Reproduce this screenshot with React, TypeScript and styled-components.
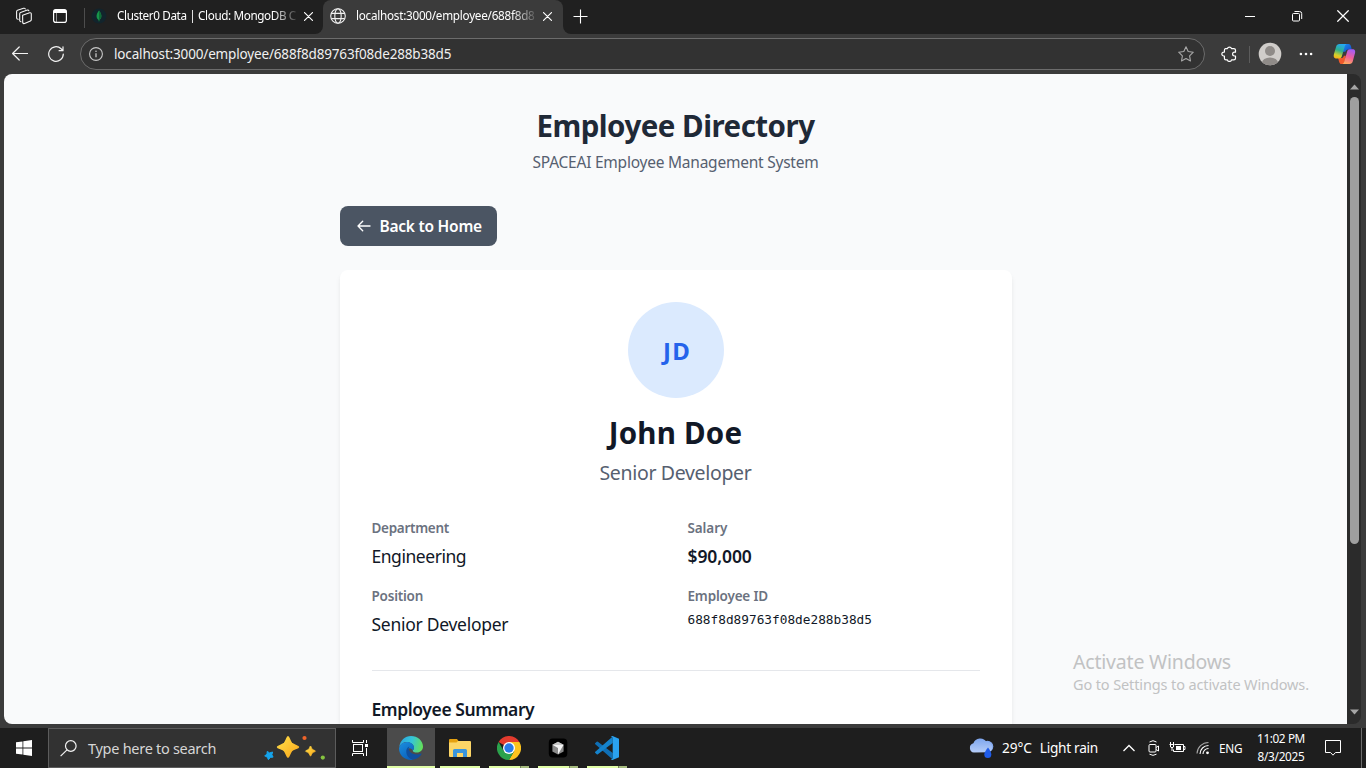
import React from "react";
import styled, { createGlobalStyle } from "styled-components";

const SANS = `"Segoe UI", "Noto Sans", "Open Sans", sans-serif`;

const GlobalStyle = createGlobalStyle`
  * { box-sizing: border-box; }
  body { margin: 0; background: #3b3b3b; font-family: ${SANS}; overflow: hidden; }
  h1, h2, h3, p { margin: 0; }
  button { font: inherit; border: 0; background: none; padding: 0; color: inherit; }
  svg { display: block; flex: none; }
`;

const Desktop = styled.div`
  display: flex;
  flex-direction: column;
  width: 1366px;
  height: 768px;
  background: #3b3b3b;
  overflow: hidden;
`;

/* Text run with explicit size and tracking */
const Label = styled.span<{ $size: number; $track?: number; $color?: string; $weight?: number }>`
  display: block;
  font-size: ${(p) => p.$size}px;
  letter-spacing: ${(p) => p.$track ?? 0}px;
  color: ${(p) => p.$color ?? "#fff"};
  font-weight: ${(p) => p.$weight ?? 400};
  white-space: nowrap;
`;

const Gap = styled.i<{ $w: number }>`
  flex: none;
  width: ${(p) => p.$w}px;
`;

/* ---------- Browser tab strip ---------- */
const TabStrip = styled.header`
  display: flex;
  height: 34px;
  background: #3b3b3b;
  color: #fff;
`;
const StripStart = styled.div`
  display: flex;
  align-items: center;
  width: 323px;
  padding: 0 10px 2px 15px;
  background: #202020;
  border-bottom-right-radius: 8px;
`;
const StripDivider = styled.i`
  width: 1px;
  height: 20px;
  margin: 3px 6px 0 17px;
  background: #4d4d4d;
`;
const TabTitle = styled.div<{ $gap: number }>`
  width: 180px;
  margin: -2px 0 0 ${(p) => p.$gap}px;
  line-height: 18px;
  mask-image: linear-gradient(90deg, #000 156px, rgba(0, 0, 0, 0.12) 180px);
`;
const ActiveTabWell = styled.div`
  width: 240px;
  background: #202020;
`;
const ActiveTab = styled.div`
  display: flex;
  align-items: center;
  height: 34px;
  padding: 0 11px 2px 7px;
  background: #3b3b3b;
  border-radius: 8px 8px 0 0;
`;
const StripRest = styled.div`
  display: flex;
  flex: 1;
  align-items: center;
  justify-content: space-between;
  padding: 0 17px 2px 10px;
  background: #202020;
  border-bottom-left-radius: 8px;
`;
const WindowButtons = styled.div`
  display: flex;
  align-items: center;
`;
const TabClose = styled.div`
  margin-left: auto;
`;

/* ---------- Browser toolbar ---------- */
const Toolbar = styled.nav`
  display: flex;
  align-items: center;
  height: 40px;
  padding-left: 12px;
  color: #f2f2f2;
`;
const AddressBar = styled.div`
  display: flex;
  flex: none;
  align-items: center;
  width: 1125px;
  height: 32px;
  margin: 0 16px;
  padding: 0 10px 0 8px;
  gap: 11px;
  background: #323232;
  border: 1px solid #6c6c6c;
  border-radius: 16px;
`;
const Url = styled.div`
  flex: 1;
  margin-top: -1px;
  line-height: 20px;
`;
const ToolDivider = styled.i`
  flex: none;
  width: 1px;
  height: 17px;
  margin: 0 8px 0 12px;
  background: #5c5c5c;
`;

/* ---------- Viewport ---------- */
const Viewport = styled.div`
  display: flex;
  height: 650px;
  margin: 0 5px 4px 4px;
  position: relative;
`;
const Page = styled.main`
  flex: 1;
  height: 650px;
  padding-top: 32px;
  overflow: hidden;
  background: #f9fafb;
  border-radius: 8px 0 0 8px;
`;
const ScrollBar = styled.div`
  display: flex;
  flex-direction: column;
  align-items: center;
  width: 14px;
  padding: 10px 0 9px;
  background: #2b2b2b;
  border-radius: 0 8px 8px 0;
`;
const ScrollThumb = styled.div`
  width: 9px;
  height: 447px;
  margin: 7px 0 auto;
  background: #9f9f9f;
  border-radius: 5px;
`;
const Container = styled.div`
  width: 672px;
  margin: 0 auto;
`;
const PageHeader = styled.div`
  margin-bottom: 32px;
  text-align: center;
`;
const Title = styled.h1`
  padding-top: 2px;
  margin-bottom: 6px;
  line-height: 36px;
`;
const Line = styled.p<{ $h: number }>`
  line-height: ${(p) => p.$h}px;
`;
const BackButton = styled.button`
  display: flex;
  align-items: center;
  gap: 8px;
  width: 157px;
  height: 40px;
  padding: 0 16px;
  margin-bottom: 24px;
  background: #4b5563;
  border-radius: 8px;
  line-height: 25px;
`;
const Card = styled.section`
  height: 520px;
  padding: 32px;
  background: #fff;
  border-radius: 8px;
  box-shadow: 0 4px 6px -1px rgba(0, 0, 0, 0.08), 0 2px 4px -1px rgba(0, 0, 0, 0.04);
`;
const Profile = styled.div`
  display: flex;
  flex-direction: column;
  align-items: center;
  margin-bottom: 31px;
`;
const Avatar = styled.div`
  display: flex;
  align-items: center;
  justify-content: center;
  width: 96px;
  height: 96px;
  padding: 2px 0 0 3px;
  margin-bottom: 16px;
  background: #dbeafe;
  border-radius: 50%;
  line-height: 32px;
`;
const Name = styled.h2`
  padding-top: 1px;
  margin-bottom: 8px;
  line-height: 36px;
`;
const Facts = styled.div`
  display: grid;
  grid-template-columns: 1fr 1fr;
  gap: 16px 24px;
  padding-bottom: 32px;
  border-bottom: 1px solid #e5e7eb;
`;
const Fact = styled.div`
  display: flex;
  flex-direction: column;
  gap: 4px;
`;
const ObjectId = styled.span`
  font-family: Consolas, "DejaVu Sans Mono", monospace;
  font-size: 12.77px;
  line-height: 19px;
  color: #111827;
`;
const Summary = styled.h3`
  margin-top: 24px;
  line-height: 28px;
`;
const Watermark = styled.aside`
  position: absolute;
  left: 1069px;
  top: 575px;
  display: flex;
  flex-direction: column;
`;

/* ---------- Taskbar ---------- */
const Taskbar = styled.footer`
  display: flex;
  height: 40px;
  background: #1e1e1e;
  color: #fff;
`;
const StartButton = styled.div`
  display: flex;
  align-items: center;
  justify-content: center;
  width: 48px;
`;
const SearchBox = styled.div`
  display: flex;
  align-items: center;
  justify-content: space-between;
  width: 288px;
  padding: 0 9px 0 11px;
  background: #323232;
  border: 1px solid #5c5c5c;
  line-height: 20px;
`;
const SearchPrompt = styled.div`
  display: flex;
  align-items: center;
  gap: 11px;
`;
const TaskView = styled.div`
  display: flex;
  align-items: center;
  width: 51px;
  padding-left: 16px;
`;
const AppButton = styled.div<{ $active?: boolean }>`
  display: flex;
  flex-direction: column;
  align-items: center;
  width: ${(p) => (p.$active ? 48 : 49)}px;
  padding-top: 8px;
  background: ${(p) => (p.$active ? "#4b4b4b" : "transparent")};
`;
const RunningBar = styled.i<{ $wide?: boolean; $stacked?: boolean }>`
  width: ${(p) => (p.$wide ? 48 : 40)}px;
  height: 2px;
  margin-top: 6px;
  background: ${(p) =>
    p.$stacked ? "linear-gradient(90deg, #e0fda6 31px, #73805a 31px 32px, #a6bc7f 32px)" : "#e0fda6"};
`;
const Tray = styled.div`
  display: flex;
  align-items: center;
  margin-left: auto;
  line-height: 18px;
`;
const Weather = styled.div`
  display: flex;
  align-items: center;
  width: 154px;
`;
const TrayIcons = styled.div`
  display: flex;
  align-items: center;
  width: 96px;
`;
const Language = styled.div`
  width: 32px;
`;
const Clock = styled.div`
  display: flex;
  flex-direction: column;
  align-items: center;
  width: 60px;
  margin-right: 14px;
  padding-bottom: 2px;
`;
const ShowDesktop = styled.i`
  width: 5px;
  height: 40px;
  margin-left: 20px;
  border-left: 1px solid #6b6b6b;
`;

/* ---------- Icons ---------- */
const WorkspacesIcon = () => (
  <svg width="18" height="18" viewBox="0 0 18 18" fill="none" stroke="#f5f5f5" strokeWidth="1.1" strokeLinejoin="round" strokeLinecap="round">
    <path d="M7.600 8.200 14.600 5.800q1.500-.3 1.700 1v5.700q0 1-.9 1.400l-5.800 2.600q-1.500.4-1.900-1z" />
    <path d="M4.700 13.500V6.800q0-1 .9-1.400L12.300 3.100q1.300-.3 1.600.7M4.700 13.500q.2 1.300 1.300 1.200" />
    <path d="M3.200 12.200Q1.700 12.300 1.600 11V4.600q0-1 .9-1.300L8.600 1.300q1.300-.3 1.700.6" />
  </svg>
);
const TabActionsIcon = () => (
  <svg width="14" height="14" viewBox="0 0 14 14">
    <rect x=".6" y=".6" width="12.8" height="12.8" rx="2.2" fill="none" stroke="#fff" strokeWidth="1.2" />
    <path d="M.6 4V2.600Q.8.8 2.600.6h8.800q1.800.2 2 2V4z" fill="#fff" />
    <path d="M3.500 4v9" stroke="#fff" opacity=".5" />
  </svg>
);
const MongoIcon = () => (
  <svg width="16" height="16" viewBox="0 0 16 16">
    <circle cx="8" cy="8" r="7.5" fill="#12242c" />
    <path d="M8 2.500c2.600 3 3.600 7 .4 9.500L8.200 13.500h-.4L7.600 12C4.400 9.500 5.400 5.500 8 2.500z" fill="#17954b" />
    <path d="M8 2.500c2.600 3 3.600 7 .4 9.500L8 13.500z" fill="#0f6b36" />
  </svg>
);
const CloseIcon = ({ size = 9, stroke = 1.3 }: { size?: number; stroke?: number }) => (
  <svg width={size} height={size} viewBox="0 0 10 10" stroke="#fff" strokeWidth={stroke} strokeLinecap="round">
    <path d="M.6.6l8.800 8.800M9.400.6L.6 9.400" />
  </svg>
);
const GlobeIcon = () => (
  <svg width="16" height="16" viewBox="0 0 16 16" fill="none" stroke="#f0f0f0" strokeWidth="1.1">
    <circle cx="8" cy="8" r="7.3" />
    <ellipse cx="8" cy="8" rx="3.2" ry="7.3" />
    <path d="M1.300 5.400h13.400M1.300 10.600h13.400" />
  </svg>
);
const PlusIcon = () => (
  <svg width="15" height="15" viewBox="0 0 15 15" stroke="#fff" strokeWidth="1.1">
    <path d="M7.500.5v14M.5 7.500h14" />
  </svg>
);
const MinimizeIcon = () => (
  <svg width="10" height="10" viewBox="0 0 10 10">
    <path d="M0 5.500h10" stroke="#fff" />
  </svg>
);
const RestoreIcon = () => (
  <svg width="12" height="12" viewBox="0 0 12 12" fill="none" stroke="#fff">
    <rect x="1.500" y="3.500" width="7" height="7.500" rx="1" />
    <path d="M3.500 1.500h5q2.200 0 2.200 2v5.500" />
  </svg>
);
const BackIcon = () => (
  <svg width="16" height="16" viewBox="0 0 16 16" fill="none" stroke="#f2f2f2" strokeWidth="1.2" strokeLinecap="round" strokeLinejoin="round">
    <path d="M15.500 7.500H.8M7.200 1L.6 7.500l6.600 6.500" />
  </svg>
);
const RefreshIcon = () => (
  <svg width="16" height="16" viewBox="0 0 16 16" fill="none" stroke="#f2f2f2" strokeWidth="1.2" strokeLinecap="round" strokeLinejoin="round">
    <path d="M15.300 8a7.300 7.300 0 1 1-2.200-5.200l1.700 1.700M15 .8v3.900h-3.900" />
  </svg>
);
const InfoIcon = () => (
  <svg width="14" height="14" viewBox="0 0 14 14" fill="none" stroke="#c8c8c8" strokeWidth="1.1">
    <circle cx="7" cy="7" r="6.4" />
    <path d="M7 6.300v3.900" strokeWidth="1.3" />
    <circle cx="7" cy="4.200" r=".8" fill="#c8c8c8" stroke="none" />
  </svg>
);
const StarIcon = () => (
  <svg width="16" height="16" viewBox="0 0 16 16" fill="none" stroke="#a8a8a8" strokeWidth="1.1" strokeLinejoin="round">
    <path d="M8 .8l2.200 4.700 5.100.7-3.700 3.600.9 5.200L8 12.500 3.500 15l.9-5.200L.7 6.200l5.100-.7z" />
  </svg>
);
const PuzzleIcon = () => (
  <svg width="16" height="16" viewBox="0 0 16 16" fill="none" stroke="#fff" strokeWidth="1.2" strokeLinejoin="round">
    <path d="M4.500 2.700h1.900a2.100 2.100 0 0 1 4.100 0h2.300q1.700 0 1.700 1.600v1.900h-1a1.900 1.900 0 0 0 0 3.800h1v2.200q0 1.600-1.700 1.600h-2.300a2.100 2.100 0 0 1-4.100 0H5q-1.600 0-1.600-1.600V10h-.6a1.950 1.950 0 0 1 0-3.900h.6V4.200q0-1.300 1.100-1.500z" />
  </svg>
);
const PersonIcon = () => (
  <svg width="24" height="24" viewBox="0 0 24 24">
    <clipPath id="person"><circle cx="12" cy="12" r="11.3" /></clipPath>
    <g clipPath="url(#person)">
      <rect width="24" height="24" fill="#d0cdca" />
      <circle cx="12" cy="9" r="5" fill="#8f8b88" />
      <ellipse cx="12" cy="21" rx="8" ry="5.5" fill="#8f8b88" />
    </g>
  </svg>
);
const DotsIcon = () => (
  <svg width="14" height="4" viewBox="0 0 14 4" fill="#fff">
    <circle cx="1.900" cy="2" r="1.3" /><circle cx="7" cy="2" r="1.3" /><circle cx="12.100" cy="2" r="1.3" />
  </svg>
);
const CopilotIcon = () => (
  <svg width="23" height="22" viewBox="0 0 23 22">
    <defs>
      <linearGradient id="cpA" x1=".6" y1="0" x2=".3" y2="1">
        <stop offset="0" stopColor="#25a9f5" /><stop offset=".45" stopColor="#2fb08a" /><stop offset=".8" stopColor="#d6d02a" /><stop offset="1" stopColor="#f8b419" />
      </linearGradient>
      <linearGradient id="cpB" x1=".6" y1="0" x2=".3" y2="1">
        <stop offset="0" stopColor="#a45cf5" /><stop offset=".5" stopColor="#ee5e9c" /><stop offset="1" stopColor="#ffab5a" />
      </linearGradient>
      <linearGradient id="cpC" x1="0" y1="0" x2="1" y2="1">
        <stop offset="0" stopColor="#1b8ff0" /><stop offset="1" stopColor="#1546c9" />
      </linearGradient>
    </defs>
    <path d="M12 1h3.500c1.600 0 2 1.200 2.500 2.600l.8 2.900h-3.500c-1.700 0-2.400.8-2.900 2.300H9.500z" fill="url(#cpC)" />
    <path d="M11 21H8.500c-1.600 0-2-1.200-2.500-2.600L5.200 15H8c1.700 0 2.400-.8 2.900-2.300h2z" fill="#f0592b" />
    <path d="M6.500 1h7.200c-1.200.4-1.600 1.400-2 2.700L9 12.800c-.5 1.700-1.200 2.700-3 2.700H3.500C.8 15.500.3 13.300 1 11L3.100 3.800C3.600 2 4.700 1 6.500 1z" fill="url(#cpA)" />
    <path d="M16.500 21H9.300c1.200-.4 1.600-1.400 2-2.700L14 8.900c.5-1.700 1.200-2.700 3-2.700h2.400c2.700 0 3.200 2 2.500 4.400l-2.100 7.600c-.5 1.800-1.500 2.800-3.300 2.800z" fill="url(#cpB)" />
  </svg>
);
const ArrowLeft = () => (
  <svg width="16" height="16" viewBox="0 0 16 16" fill="none" stroke="#fff" strokeWidth="1.35" strokeLinecap="round" strokeLinejoin="round">
    <path d="M14 8H2M6.700 3.300L2 8l4.700 4.700" />
  </svg>
);
const Caret = ({ down }: { down?: boolean }) => (
  <svg width="9" height="6" viewBox="0 0 9 6">
    <path d={down ? "M0 .5h9L4.500 5.500z" : "M0 5.500h9L4.500.5z"} fill="#a5a5a5" />
  </svg>
);
const WindowsIcon = () => (
  <svg width="16" height="16" viewBox="0 0 16 16" fill="#fff">
    <path d="M0 2.300l6.500-.9v6.200H0zM7.300 1.300L16 0v7.600H7.300zM0 8.400h6.500v6.200L0 13.700zM7.300 8.400H16V16l-8.700-1.200z" />
  </svg>
);
const SearchIcon = () => (
  <svg width="17" height="17" viewBox="0 0 17 17" fill="none" stroke="#f2f2f2" strokeWidth="1.2">
    <circle cx="10.800" cy="6" r="5.3" /><path d="M7 9.800L.6 16.200" />
  </svg>
);
const SparklesIcon = () => (
  <svg width="62" height="28" viewBox="0 0 62 28">
    <defs>
      <linearGradient id="spark" x1="0" y1="0" x2="1" y2="1">
        <stop offset="0" stopColor="#ffe04a" /><stop offset="1" stopColor="#f9a61a" />
      </linearGradient>
    </defs>
    <g fill="url(#spark)" stroke="url(#spark)" strokeLinejoin="round">
      <path strokeWidth="1.5" d="M24 2.800c1 0 1.800 4.800 3.600 6.600 1.800 1.700 6.900 2.400 6.900 3.600s-5.100 1.900-6.900 3.600C25.800 18.400 25 23.300 24 23.300s-1.800-4.900-3.600-6.700c-1.800-1.700-6.900-2.400-6.900-3.600s5.100-1.900 6.900-3.600c1.800-1.800 2.600-6.600 3.600-6.600z" />
      <path strokeWidth=".8" d="M46.500 12c.5 0 .9 2.400 1.900 3.300.9.900 3.100 1.200 3.100 1.800s-2.200.9-3.100 1.800c-1 1-1.400 3.200-1.900 3.200s-.9-2.200-1.900-3.200c-.9-.9-3.100-1.200-3.100-1.800s2.200-.9 3.100-1.800c1-.9 1.400-3.300 1.900-3.300z" />
    </g>
    <path d="M3.200 17.400l2.400 1.500 3-.9-.7 2.800 1.200 2.300-2.700.3-2 2.300-1.100-2.500L.7 21.800l2.300-1.500z" fill="#15a4ec" stroke="#15a4ec" strokeLinejoin="round" />
    <circle cx="40.500" cy="4" r="2.1" fill="#f0642a" />
    <circle cx="58.800" cy="23.600" r="2.1" fill="#86c440" />
  </svg>
);
const TaskViewIcon = () => (
  <svg width="17" height="16" viewBox="0 0 17 16" fill="none" stroke="#fff">
    <rect x="1.500" y="4.500" width="9" height="7" />
    <path d="M.5 0v2.500h11V0M.5 16v-2.500h11V16M14.500 0v3M14.500 8v8" />
    <rect x="13" y="4" width="3" height="3" fill="#fff" stroke="none" />
  </svg>
);
const EdgeIcon = () => (
  <svg width="24" height="24" viewBox="0 0 24 24">
    <defs>
      <linearGradient id="eg1" x1="0" y1=".3" x2="1" y2=".5">
        <stop offset="0" stopColor="#2aa6e0" /><stop offset=".5" stopColor="#35c5d8" /><stop offset="1" stopColor="#63e05a" />
      </linearGradient>
      <linearGradient id="eg2" x1="0" y1="0" x2=".6" y2="1">
        <stop offset="0" stopColor="#1b8fde" /><stop offset="1" stopColor="#0b62bd" />
      </linearGradient>
    </defs>
    <path d="M.3 11C1 4.500 6 0 12 0c6.500 0 12 4.800 12 10.500 0 3.500-2.700 6-6 6-2.600 0-4.200-.9-4.200-1.800 0-.6 1.200-1.200 1.200-3C15 8.500 11.500 6 8 6 4.300 6 1.500 8 .3 11z" fill="url(#eg1)" />
    <path d="M0 12.500C.5 8.800 4 6 8 6c3.600 0 7 2.300 7 5.700 0 1.500-.8 2.200-1.200 2.900-.8-1.600-2.300-2.300-3.500-2.300-2 1.200-2.300 3.700-1.600 6C9.500 21 12 23.500 15 23.600c-1 .3-2 .4-3 .4C5.500 24 0 19 0 12.500z" fill="url(#eg2)" />
    <path d="M10.300 10.500C8 11.500 6.800 14 7.400 17c.8 4 4 6.700 7.600 6.600 3.300-.7 6-2.700 7.600-5.600.3-.5-.1-.8-.6-.5-1.200.6-2.600 1-4 1-4.500 0-8.300-2.900-8.300-5.700 0-.9.2-1.700.6-2.300z" fill="#104f9e" />
  </svg>
);
const ExplorerIcon = () => (
  <svg width="24" height="24" viewBox="0 0 24 24">
    <path d="M1 4q0-1 1-1h7l1.500 2H1z" fill="#e5a110" />
    <path d="M1 5h21q1 0 1 1v14q0 1-1 1H2q-1 0-1-1z" fill="#fcd667" />
    <path d="M1 5h9L8.500 6.500H1z" fill="#e5a110" />
    <path d="M5 21v-6.500q0-1.500 1.500-1.500h11q1.500 0 1.500 1.500V21h-4v-4H9v4z" fill="#3a96dd" />
  </svg>
);
const ChromeIcon = () => (
  <svg width="24" height="24" viewBox="0 0 24 24">
    <path d="M12 12L1.600 6A12 12 0 0 1 22.400 6z" fill="#e33b2e" />
    <path d="M12 6h10.400A12 12 0 0 1 12 24l5.200-9z" fill="#fcc31e" />
    <path d="M6.800 15L1.600 6A12 12 0 0 0 12 24l5.200-9z" fill="#2ba24c" />
    <circle cx="12" cy="12" r="6" fill="#fff" />
    <circle cx="12" cy="12" r="4.7" fill="#2a7bea" />
  </svg>
);
const CursorIcon = () => (
  <svg width="24" height="24" viewBox="0 0 24 24">
    <rect x="2.800" y="2.500" width="18.500" height="19" rx="4" fill="#000" />
    <path d="M12 5.800l5.600 3v6.600L12 18.500l-5.600-3.100V8.800z" fill="#8a8a8a" />
    <path d="M6.400 8.800L12 5.800l5.600 3z" fill="#c8c8c8" />
    <path d="M6.400 8.800h11.200L12 18.500V12z" fill="#f4f4f4" />
  </svg>
);
const CodeIcon = () => (
  <svg width="24" height="24" viewBox="0 0 24 24">
    <path d="M0 7.900q-.1-.6.400-1L1.700 5.700q.6-.4 1.200 0L17.700 17v6.500z" fill="#0f6fb5" />
    <path d="M0 16.100q-.1.600.4 1l1.300 1.200q.6.400 1.200 0L17.700 7V.5z" fill="#1583cc" />
    <path d="M17.500 0L24 2.800v18.400L17.500 24q-1 .1-1.700-.9 1.900.6 1.900-1V1.900q0-1.600-1.900-1Q16.500-.1 17.500 0z" fill="#2aa2f0" />
  </svg>
);
const RainIcon = () => (
  <svg width="25" height="22" viewBox="0 0 25 22">
    <defs>
      <linearGradient id="cloud" x1="0" y1="0" x2="0" y2="1">
        <stop offset="0" stopColor="#7ea6ee" /><stop offset="1" stopColor="#b5cdf8" />
      </linearGradient>
    </defs>
    <circle cx="18.500" cy="9.500" r="5.8" fill="#86abef" />
    <path d="M5 15.500a4.700 4.700 0 0 1-.6-9.200A7.300 7.300 0 0 1 17.500 5a5.300 5.300 0 0 1 2 10.300z" fill="url(#cloud)" />
    <path d="M19 10.500c2.200 3 3.300 5 3.300 7a3.500 3.500 0 0 1-7 0c0-2 1.400-4 3.700-7z" fill="#1f5cea" />
  </svg>
);
const ChevronUp = () => (
  <svg width="12" height="8" viewBox="0 0 12 8" fill="none" stroke="#fff" strokeWidth="1.3">
    <path d="M.5 7L6 1.500 11.500 7" />
  </svg>
);
const MeetIcon = () => (
  <svg width="12" height="16" viewBox="0 0 12 16" fill="none" stroke="#fff">
    <rect x="1" y="4.500" width="7" height="7.500" rx="1" />
    <path d="M8 7.500l2.500-1.500v5L8 9.500M1.500 2Q5-.6 8.500 2M1.500 14.200q3.500 2.300 7 0" />
  </svg>
);
const BatteryIcon = () => (
  <svg width="17" height="12" viewBox="0 0 17 12" fill="none" stroke="#fff">
    <path d="M6 2.500h8.500v7h-10V7.500M14.500 4.500H16v3h-1.500" />
    <rect x="7" y="4" width="5" height="4" fill="#fff" stroke="none" />
    <path d="M.500 2.500h5M1.500 2.500V5q1.500 1.500 3 0V2.500M1.500 0v2M4.500 0v2M3 6v3" />
  </svg>
);
const WifiIcon = () => (
  <svg width="14" height="14" viewBox="0 0 14 14" fill="none" stroke="#fff" strokeWidth="1.1">
    <path d="M1 12.500A11.500 11.500 0 0 1 12.500 1.500" opacity=".6" />
    <path d="M4 13A8.500 8.500 0 0 1 12.500 4.500M7 13a5.500 5.500 0 0 1 5.500-5.500" />
    <circle cx="11.500" cy="11.800" r="1.4" fill="#fff" stroke="none" />
  </svg>
);
const NotificationIcon = () => (
  <svg width="16" height="16" viewBox="0 0 16 16" fill="none" stroke="#fff">
    <path d="M.5.500h15v12h-5L8 15.200 5.500 12.500h-5z" />
  </svg>
);

export default function App() {
  return (
    <Desktop>
      <GlobalStyle />
      <TabStrip>
        <StripStart>
          <WorkspacesIcon />
          <Gap $w={20} />
          <TabActionsIcon />
          <StripDivider />
          <MongoIcon />
          <TabTitle $gap={10}>
            <Label $size={11.7} $track={-0.37}>Cluster0 Data | Cloud: MongoDB C</Label>
          </TabTitle>
          <TabClose><CloseIcon /></TabClose>
        </StripStart>
        <ActiveTabWell>
          <ActiveTab>
            <GlobeIcon />
            <TabTitle $gap={10}>
              <Label $size={11.7} $track={-0.25}>localhost:3000/employee/688f8d8</Label>
            </TabTitle>
            <TabClose><CloseIcon /></TabClose>
          </ActiveTab>
        </ActiveTabWell>
        <StripRest>
          <PlusIcon />
          <WindowButtons>
            <MinimizeIcon />
            <Gap $w={36} />
            <RestoreIcon />
            <Gap $w={34} />
            <CloseIcon size={12} stroke={1} />
          </WindowButtons>
        </StripRest>
      </TabStrip>

      <Toolbar>
        <BackIcon />
        <Gap $w={20} />
        <RefreshIcon />
        <AddressBar>
          <InfoIcon />
          <Url><Label $size={13.5} $track={-0.16} $color="#f0f0f0">localhost:3000/employee/688f8d89763f08de288b38d5</Label></Url>
          <StarIcon />
        </AddressBar>
        <PuzzleIcon />
        <ToolDivider />
        <PersonIcon />
        <Gap $w={17} />
        <DotsIcon />
        <Gap $w={20} />
        <CopilotIcon />
      </Toolbar>

      <Viewport>
        <Page>
          <Container>
            <PageHeader>
              <Title><Label $size={29.5} $track={-0.52} $weight={700} $color="#1f2937">Employee Directory</Label></Title>
              <Line $h={24}><Label $size={15.5} $track={-0.23} $color="#566070">SPACEAI Employee Management System</Label></Line>
            </PageHeader>
            <BackButton>
              <ArrowLeft />
              <Label $size={15.5} $track={-0.25} $weight={600}>Back to Home</Label>
            </BackButton>
            <Card>
              <Profile>
                <Avatar><Label $size={24} $track={1.2} $weight={700} $color="#2563eb">JD</Label></Avatar>
                <Name><Label $size={29.5} $track={0.2} $weight={700} $color="#111827">John Doe</Label></Name>
                <Line $h={28}><Label $size={19.5} $track={-0.33} $color="#566070">Senior Developer</Label></Line>
              </Profile>
              <Facts>
                <Fact>
                  <Line $h={20}><Label $size={13.5} $track={-0.3} $weight={600} $color="#6b7280">Department</Label></Line>
                  <Line $h={28}><Label $size={17.5} $track={-0.46} $color="#111827">Engineering</Label></Line>
                </Fact>
                <Fact>
                  <Line $h={20}><Label $size={13.5} $track={-0.1} $weight={600} $color="#6b7280">Salary</Label></Line>
                  <Line $h={28}><Label $size={17.5} $track={-0.1} $weight={600} $color="#111827">$90,000</Label></Line>
                </Fact>
                <Fact>
                  <Line $h={20}><Label $size={13.5} $track={-0.22} $weight={600} $color="#6b7280">Position</Label></Line>
                  <Line $h={28}><Label $size={17.5} $track={-0.28} $color="#111827">Senior Developer</Label></Line>
                </Fact>
                <Fact>
                  <Line $h={20}><Label $size={13.5} $track={-0.18} $weight={600} $color="#6b7280">Employee ID</Label></Line>
                  <ObjectId>688f8d89763f08de288b38d5</ObjectId>
                </Fact>
              </Facts>
              <Summary><Label $size={17.5} $track={-0.41} $weight={600} $color="#111827">Employee Summary</Label></Summary>
            </Card>
          </Container>
        </Page>
        <ScrollBar>
          <Caret />
          <ScrollThumb />
          <Caret down />
        </ScrollBar>
        <Watermark>
          <Line $h={26}><Label $size={19.5} $track={-0.2} $color="#c1c2c3">Activate Windows</Label></Line>
          <Line $h={18}><Label $size={14.5} $track={-0.12} $color="#c1c2c3">Go to Settings to activate Windows.</Label></Line>
        </Watermark>
      </Viewport>

      <Taskbar>
        <StartButton><WindowsIcon /></StartButton>
        <SearchBox>
          <SearchPrompt>
            <SearchIcon />
            <Label $size={14.5} $track={-0.28} $color="#d6d6d6">Type here to search</Label>
          </SearchPrompt>
          <SparklesIcon />
        </SearchBox>
        <TaskView><TaskViewIcon /></TaskView>
        <AppButton $active><EdgeIcon /><RunningBar $wide /></AppButton>
        <AppButton><ExplorerIcon /><RunningBar /></AppButton>
        <AppButton><ChromeIcon /><RunningBar $stacked /></AppButton>
        <AppButton><CursorIcon /><RunningBar $stacked /></AppButton>
        <AppButton><CodeIcon /><RunningBar $stacked /></AppButton>
        <Tray>
          <Weather>
            <RainIcon />
            <Gap $w={8} />
            <Label $size={13.7} $track={-0.1}>29°C</Label>
            <Gap $w={8} />
            <Label $size={13.7} $track={-0.3}>Light rain</Label>
          </Weather>
          <TrayIcons>
            <ChevronUp />
            <Gap $w={13} />
            <MeetIcon />
            <Gap $w={9} />
            <BatteryIcon />
            <Gap $w={10} />
            <WifiIcon />
          </TrayIcons>
          <Language><Label $size={11.8} $track={-0.25}>ENG</Label></Language>
          <Clock>
            <Label $size={11.8} $track={-0.4}>11:02 PM</Label>
            <Label $size={11.8} $track={-0.3}>8/3/2025</Label>
          </Clock>
          <NotificationIcon />
          <ShowDesktop />
        </Tray>
      </Taskbar>
    </Desktop>
  );
}
